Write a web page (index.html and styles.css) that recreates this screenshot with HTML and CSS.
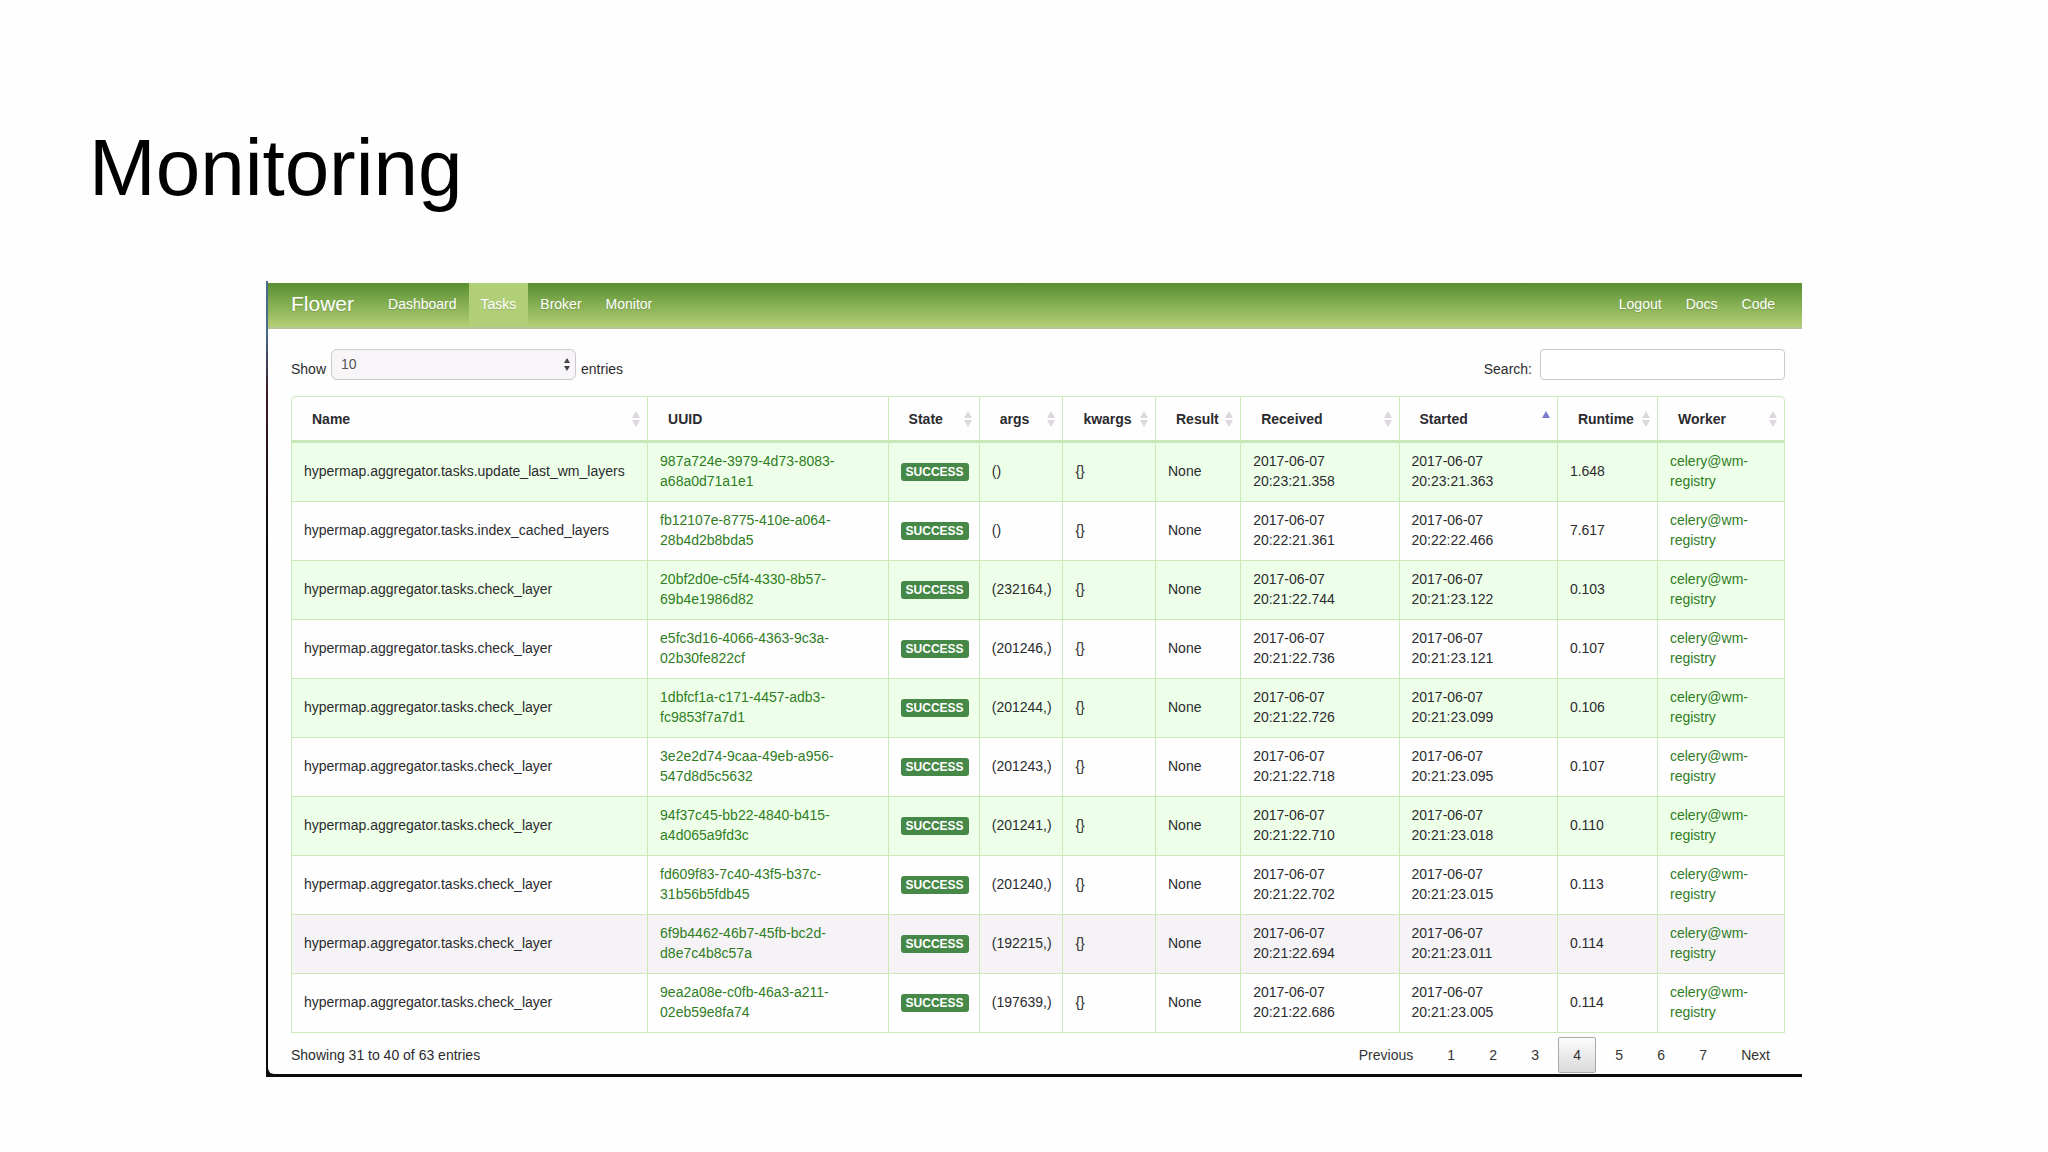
FILE: index.html
```html
<!DOCTYPE html>
<html lang="en">
<head>
  <meta charset="UTF-8">
  <meta name="viewport" content="width=device-width, initial-scale=1.0">
  <title>Monitoring</title>
  <link rel="stylesheet" href="styles.css">
</head>
<body>

  <h1>Monitoring</h1>

  <div class="window">
    <div class="window-inner">

      <nav class="navbar">
        <a href="#" class="brand">Flower</a>
        <a href="#">Dashboard</a>
        <a href="#" class="active">Tasks</a>
        <a href="#">Broker</a>
        <a href="#">Monitor</a>
        <div class="nav-right">
          <a href="#">Logout</a>
          <a href="#">Docs</a>
          <a href="#">Code</a>
        </div>
      </nav>

      <div class="content">
        <!-- Table controls -->
        <div class="controls">
          <div class="control">
            <label for="length">Show</label>
            <div class="select-wrap">
              <select id="length">
                <option>10</option>
                <option>25</option>
                <option>50</option>
                <option>100</option>
              </select>
              <svg viewBox="0 0 8 14" width="8" height="14"><path d="M4 0L7 5H1zM4 13L1 8H7z" fill="#444"/></svg>
            </div>
            <label for="length">entries</label>
          </div>
          <div class="control search">
            <label for="search">Search:</label>
            <input type="text" id="search">
          </div>
        </div>

        <table>
          <colgroup>
            <col class="col-name">
            <col class="col-uuid">
            <col class="col-state">
            <col class="col-args">
            <col class="col-kwargs">
            <col class="col-result">
            <col class="col-date">
            <col class="col-date">
            <col class="col-runtime">
            <col class="col-worker">
          </colgroup>
          <thead>
            <tr>
              <th class="sort">Name</th>
              <th>UUID</th>
              <th class="sort">State</th>
              <th class="sort">args</th>
              <th class="sort">kwargs</th>
              <th class="sort">Result</th>
              <th class="sort">Received</th>
              <th class="sort asc">Started</th>
              <th class="sort">Runtime</th>
              <th class="sort">Worker</th>
            </tr>
          </thead>
          <tbody>
            <tr>
              <td>hypermap.aggregator.tasks.update_last_wm_layers</td>
              <td><a href="#">987a724e-3979-4d73-8083-a68a0d71a1e1</a></td>
              <td><span class="label">SUCCESS</span></td>
              <td>()</td>
              <td>{}</td>
              <td>None</td>
              <td>2017-06-07 20:23:21.358</td>
              <td>2017-06-07 20:23:21.363</td>
              <td>1.648</td>
              <td><a href="#">celery@wm-registry</a></td>
            </tr>
            <tr>
              <td>hypermap.aggregator.tasks.index_cached_layers</td>
              <td><a href="#">fb12107e-8775-410e-a064-28b4d2b8bda5</a></td>
              <td><span class="label">SUCCESS</span></td>
              <td>()</td>
              <td>{}</td>
              <td>None</td>
              <td>2017-06-07 20:22:21.361</td>
              <td>2017-06-07 20:22:22.466</td>
              <td>7.617</td>
              <td><a href="#">celery@wm-registry</a></td>
            </tr>
            <tr>
              <td>hypermap.aggregator.tasks.check_layer</td>
              <td><a href="#">20bf2d0e-c5f4-4330-8b57-69b4e1986d82</a></td>
              <td><span class="label">SUCCESS</span></td>
              <td>(232164,)</td>
              <td>{}</td>
              <td>None</td>
              <td>2017-06-07 20:21:22.744</td>
              <td>2017-06-07 20:21:23.122</td>
              <td>0.103</td>
              <td><a href="#">celery@wm-registry</a></td>
            </tr>
            <tr>
              <td>hypermap.aggregator.tasks.check_layer</td>
              <td><a href="#">e5fc3d16-4066-4363-9c3a-02b30fe822cf</a></td>
              <td><span class="label">SUCCESS</span></td>
              <td>(201246,)</td>
              <td>{}</td>
              <td>None</td>
              <td>2017-06-07 20:21:22.736</td>
              <td>2017-06-07 20:21:23.121</td>
              <td>0.107</td>
              <td><a href="#">celery@wm-registry</a></td>
            </tr>
            <tr>
              <td>hypermap.aggregator.tasks.check_layer</td>
              <td><a href="#">1dbfcf1a-c171-4457-adb3-fc9853f7a7d1</a></td>
              <td><span class="label">SUCCESS</span></td>
              <td>(201244,)</td>
              <td>{}</td>
              <td>None</td>
              <td>2017-06-07 20:21:22.726</td>
              <td>2017-06-07 20:21:23.099</td>
              <td>0.106</td>
              <td><a href="#">celery@wm-registry</a></td>
            </tr>
            <tr>
              <td>hypermap.aggregator.tasks.check_layer</td>
              <td><a href="#">3e2e2d74-9caa-49eb-a956-547d8d5c5632</a></td>
              <td><span class="label">SUCCESS</span></td>
              <td>(201243,)</td>
              <td>{}</td>
              <td>None</td>
              <td>2017-06-07 20:21:22.718</td>
              <td>2017-06-07 20:21:23.095</td>
              <td>0.107</td>
              <td><a href="#">celery@wm-registry</a></td>
            </tr>
            <tr>
              <td>hypermap.aggregator.tasks.check_layer</td>
              <td><a href="#">94f37c45-bb22-4840-b415-a4d065a9fd3c</a></td>
              <td><span class="label">SUCCESS</span></td>
              <td>(201241,)</td>
              <td>{}</td>
              <td>None</td>
              <td>2017-06-07 20:21:22.710</td>
              <td>2017-06-07 20:21:23.018</td>
              <td>0.110</td>
              <td><a href="#">celery@wm-registry</a></td>
            </tr>
            <tr>
              <td>hypermap.aggregator.tasks.check_layer</td>
              <td><a href="#">fd609f83-7c40-43f5-b37c-31b56b5fdb45</a></td>
              <td><span class="label">SUCCESS</span></td>
              <td>(201240,)</td>
              <td>{}</td>
              <td>None</td>
              <td>2017-06-07 20:21:22.702</td>
              <td>2017-06-07 20:21:23.015</td>
              <td>0.113</td>
              <td><a href="#">celery@wm-registry</a></td>
            </tr>
            <tr class="hovered">
              <td>hypermap.aggregator.tasks.check_layer</td>
              <td><a href="#">6f9b4462-46b7-45fb-bc2d-d8e7c4b8c57a</a></td>
              <td><span class="label">SUCCESS</span></td>
              <td>(192215,)</td>
              <td>{}</td>
              <td>None</td>
              <td>2017-06-07 20:21:22.694</td>
              <td>2017-06-07 20:21:23.011</td>
              <td>0.114</td>
              <td><a href="#">celery@wm-registry</a></td>
            </tr>
            <tr>
              <td>hypermap.aggregator.tasks.check_layer</td>
              <td><a href="#">9ea2a08e-c0fb-46a3-a211-02eb59e8fa74</a></td>
              <td><span class="label">SUCCESS</span></td>
              <td>(197639,)</td>
              <td>{}</td>
              <td>None</td>
              <td>2017-06-07 20:21:22.686</td>
              <td>2017-06-07 20:21:23.005</td>
              <td>0.114</td>
              <td><a href="#">celery@wm-registry</a></td>
            </tr>
          </tbody>
        </table>

        <div class="table-footer">
          <div>Showing 31 to 40 of 63 entries</div>
          <div class="pagination">
            <a href="#">Previous</a>
            <a href="#">1</a>
            <a href="#">2</a>
            <a href="#">3</a>
            <a href="#" class="current">4</a>
            <a href="#">5</a>
            <a href="#">6</a>
            <a href="#">7</a>
            <a href="#">Next</a>
          </div>
        </div>
      </div>

    </div>
  </div>

</body>
</html>
```
FILE: styles.css
```css
* {
  box-sizing: border-box;
}

body {
  margin: 0;
  padding: 123px 246px 76px 266px;
  background-color: #fefefe;
  font-family: "Liberation Sans", Arial, sans-serif;
  font-size: 14px;
  line-height: 20px;
  color: #2b2b2f;
}

/* Slide heading */
h1 {
  margin: 0 0 68px -177px;
  font-size: 80px;
  line-height: 90px;
  font-weight: normal;
  color: #000;
}

a {
  color: #2f7d1f;
  text-decoration: none;
}

/* Dark edge on the left and bottom of the window */
.window {
  padding: 0 0 3px 2px;
  background: linear-gradient(#4a6a8c 0, #4a6a8c 50px, #3a1d2a 110px, #201018 200px, #0c0c10 260px);
}

.window-inner {
  padding-top: 2px;
  background-color: #fefefe;
  border-bottom-left-radius: 6px;
}

/* Navigation bar */
.navbar {
  display: flex;
  height: 46px;
  padding: 0 15px 0 23px;
  background: linear-gradient(#588f31, #b4cf75);
  border-bottom: 2px solid #b3c598;
}

.navbar a {
  padding: 0 12px;
  line-height: 42px;
  color: #fff;
  text-shadow: 0 1px 1px rgba(0, 0, 0, 0.15);
}

.navbar a:hover {
  background-color: #b1cf76;
}

.navbar .brand {
  padding: 0 22px 0 0;
  font-size: 21px;
}

.navbar .active {
  background-color: #b1cf76;
}

.nav-right {
  display: flex;
  margin-left: auto;
}

.content {
  padding: 20px 17px 1px 23px;
}

/* Page length and search */
.controls {
  display: flex;
  justify-content: space-between;
  margin-bottom: 8px;
}

.control {
  display: flex;
  align-items: center;
  gap: 5px;
}

.search {
  gap: 8px;
}

.select-wrap {
  position: relative;
  margin-bottom: 8px;
}

.select-wrap svg {
  position: absolute;
  top: 9px;
  right: 5px;
  pointer-events: none;
}

select,
input {
  display: block;
  width: 245px;
  height: 31px;
  padding: 0 9px 2px;
  border: 1px solid #ccc8ce;
  font-family: inherit;
  font-size: 14px;
  color: #555;
}

select {
  appearance: none;
  background-color: #f7f5f8;
  border-radius: 6px;
}

input {
  margin-bottom: 8px;
  background-color: #fff;
  border-radius: 4px;
}

/* Tasks table */
table {
  width: 100%;
  table-layout: fixed;
  border-collapse: separate;
  border-spacing: 0;
}

.col-name { width: 23.9%; }
.col-uuid { width: 16.1%; }
.col-state { width: 6.1%; }
.col-args { width: 5.6%; }
.col-kwargs { width: 6.2%; }
.col-result { width: 5.7%; }
.col-date { width: 10.6%; }
.col-runtime { width: 6.7%; }
.col-worker { width: 8.5%; }

th,
td {
  border-right: 1px solid #cbeab9;
  border-bottom: 1px solid #cbeab9;
  text-align: left;
}

th:first-child,
td:first-child {
  border-left: 1px solid #cbeab9;
}

th {
  position: relative;
  padding: 12px 8px 11px 20px;
  border-top: 1px solid #cbeab9;
  border-bottom: 3px solid #c9e8b8;
}

th:first-child {
  border-top-left-radius: 5px;
}

th:last-child {
  border-top-right-radius: 5px;
}

td {
  padding: 8px 11px 10px 12px;
  vertical-align: middle;
}

tbody tr:nth-child(odd) {
  background-color: #eeffe9;
}

tbody tr.hovered {
  background-color: #f5f3f5;
}

/* Sort arrows */
.sort::before,
.sort::after {
  content: '';
  position: absolute;
  right: 7px;
  border: 4px solid transparent;
}

.sort::before {
  top: 14px;
  border-top: 0;
  border-bottom: 7px solid #dcd8dd;
}

.sort::after {
  top: 23px;
  border-bottom: 0;
  border-top: 7px solid #dcd8dd;
}

.asc::before {
  border-bottom-color: #7d7bd0;
}

.asc::after {
  display: none;
}

.label {
  display: inline-block;
  padding: 0 5px;
  background-color: #468847;
  border-radius: 3px;
  font-size: 12px;
  font-weight: bold;
  line-height: 18px;
  color: #fff;
}

/* Info and pagination */
.table-footer {
  display: flex;
  justify-content: space-between;
  align-items: center;
  padding-top: 4px;
}

.pagination {
  display: flex;
  gap: 4px;
}

.pagination a {
  min-width: 38px;
  padding: 7px 14px;
  border: 1px solid transparent;
  border-radius: 2px;
  text-align: center;
  color: #333;
}

.pagination .current {
  border-color: #a9a9ab;
  background: linear-gradient(#fcfcfc, #dadadb);
}
```
